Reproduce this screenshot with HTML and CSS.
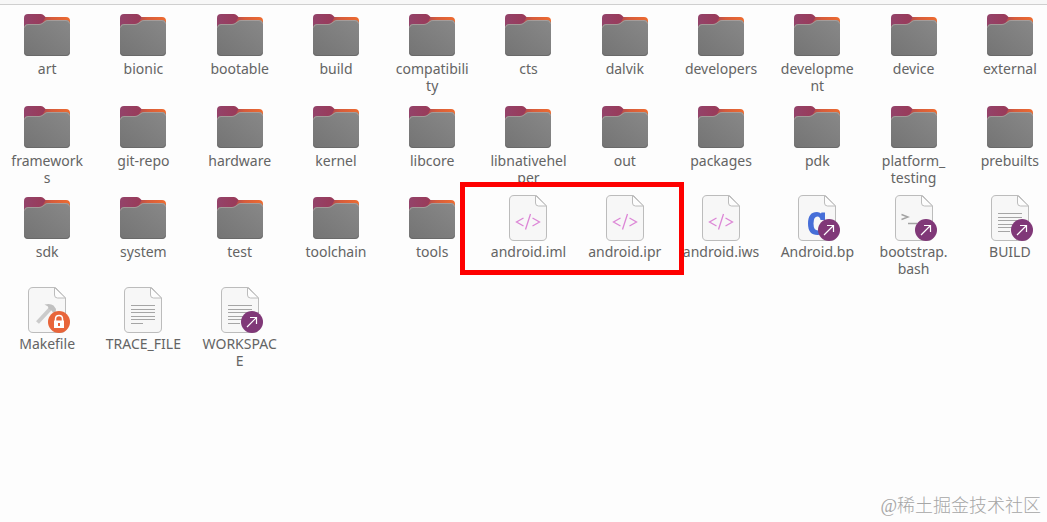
FILE: index.html
```html
<!DOCTYPE html>
<html lang="en">
<head>
<meta charset="utf-8">
<title>Files</title>
<link rel="stylesheet" href="styles.css">
</head>
<body>
<svg class="defs" width="0" height="0" aria-hidden="true">
  <defs>
    <linearGradient id="back" x1="0" x2="1" y1="0" y2="0">
      <stop offset="0" stop-color="#8a3d62"/><stop offset=".4" stop-color="#b04a50"/><stop offset=".6" stop-color="#d65c3c"/><stop offset="1" stop-color="#ee6c30"/>
    </linearGradient>
    <linearGradient id="tab" x1="0" x2="1" y1="0" y2="0">
      <stop offset="0" stop-color="#93436a"/><stop offset="1" stop-color="#9a3a58"/>
    </linearGradient>
    <linearGradient id="front" x1="0" x2="1" y1="1" y2="0">
      <stop offset="0" stop-color="#747474"/><stop offset="1" stop-color="#888"/>
    </linearGradient>
    <symbol id="folder" viewBox="0 0 48 48">
      <path fill="url(#back)" d="M1 8q0-3 4-3h38q4 0 4 4v9H1z"/>
      <path fill="url(#tab)" d="M1 6q0-4 4-4h13q2 0 3 1.500l1.500 1.500-3 6q-1 2-4 2H5q-3 0-4 3z"/>
      <path fill="url(#front)" d="M1 16q0-4 4-4h11q2 0 4-1.500l2-1.500q1-1 3-1h18q4 0 4 4v28q0 4-4 4H5q-4 0-4-4z"/>
      <path fill="none" stroke="#b3a6a4" stroke-width=".7" d="M1.500 15.500q.5-3 3.500-3h11q2 0 4-1.500l2-1.500q1-1 3-1h18q3 0 3.500 3"/>
      <path fill="none" stroke="#666" stroke-width=".8" d="M1.500 40.500q0 3 3.500 3h38q3.500 0 3.500-3"/>
    </symbol>
    <symbol id="page" viewBox="0 0 48 48">
      <path fill="#f7f7f7" stroke="#bcbcbc" d="M10 .5h22.500l10 10.500v30q0 4.500-4.500 4.500H10q-4.500 0-4.500-4.500V5q0-4.500 4.500-4.500z"/>
      <path fill="#fdfdfd" stroke="#bcbcbc" d="M31.500.5v7.500q0 3 3 3h8z"/>
    </symbol>
    <symbol id="code" viewBox="0 0 48 48">
      <use href="#page"/>
      <path fill="none" stroke="#dc86d6" stroke-width="1.300" d="M19.500 23l-7 4 7 4M28.500 23l7 4-7 4M26.500 19l-5 15.500"/>
    </symbol>
    <symbol id="text" viewBox="0 0 48 48">
      <use href="#page"/>
      <path fill="none" stroke="#a5a5a5" d="M12 18.500h24M12 22.500h24M12 25.500h24M12 29.500h24M12 32.500h24M12 36.500h12"/>
    </symbol>
    <symbol id="csource" viewBox="0 0 48 48">
      <use href="#page"/>
      <path fill="#466ed8" d="M32 17.500V25h-4.500q-.5-3.500-3-3.500-4 0-4 7t4.500 7q3 0 5-2l2 3.500q-3 3-7.500 3Q15 40 15 28.500 15 17 24 17q2.500 0 4 1.500l.5-1z"/>
    </symbol>
    <symbol id="shell" viewBox="0 0 48 48">
      <use href="#page"/>
      <path fill="none" stroke="#a3a3a3" stroke-width="1.400" d="M11.500 19.500l6.500 2.500-6.500 2.500M18 28.500h9"/>
    </symbol>
    <symbol id="make" viewBox="0 0 48 48">
      <use href="#page"/>
      <path fill="none" stroke="#cbcbcb" stroke-width="4" d="M14.500 35.500l13-14"/>
      <path fill="#c0c0c0" d="M21.500 17.500q6-1.500 9 1l2.500 3.500-.5 4-2.500-.500-1.500-2-3-2-.5-2z"/>
    </symbol>
    <symbol id="link" viewBox="0 0 48 48">
      <circle cx="36" cy="35" r="11" fill="#803878"/>
      <path fill="none" stroke="#fff" stroke-width="1.200" d="M31 40l9.500-9.500M34 30.500h6.500V37"/>
    </symbol>
    <symbol id="lock" viewBox="0 0 48 48">
      <circle cx="36" cy="35" r="11" fill="#e8653a"/>
      <path fill="none" stroke="#fff" stroke-width="1.500" d="M32.500 34v-2q0-3.500 3.500-3.500t3.500 3.500v2"/>
      <path fill="#fff" fill-rule="evenodd" d="M31 33.500h10V41H31zM35 36v3h2v-3z"/>
    </symbol>
  </defs>
</svg>

<header class="toolbar-edge"></header>
<main>
  <ul class="files">
    <li class="file"><svg class="icon"><use href="#folder"/></svg><span>art</span></li>
    <li class="file"><svg class="icon"><use href="#folder"/></svg><span>bionic</span></li>
    <li class="file"><svg class="icon"><use href="#folder"/></svg><span>bootable</span></li>
    <li class="file"><svg class="icon"><use href="#folder"/></svg><span>build</span></li>
    <li class="file"><svg class="icon"><use href="#folder"/></svg><span>compatibili<br>ty</span></li>
    <li class="file"><svg class="icon"><use href="#folder"/></svg><span>cts</span></li>
    <li class="file"><svg class="icon"><use href="#folder"/></svg><span>dalvik</span></li>
    <li class="file"><svg class="icon"><use href="#folder"/></svg><span>developers</span></li>
    <li class="file"><svg class="icon"><use href="#folder"/></svg><span>developme<br>nt</span></li>
    <li class="file"><svg class="icon"><use href="#folder"/></svg><span>device</span></li>
    <li class="file"><svg class="icon"><use href="#folder"/></svg><span>external</span></li>

    <li class="file"><svg class="icon"><use href="#folder"/></svg><span>framework<br>s</span></li>
    <li class="file"><svg class="icon"><use href="#folder"/></svg><span>git-repo</span></li>
    <li class="file"><svg class="icon"><use href="#folder"/></svg><span>hardware</span></li>
    <li class="file"><svg class="icon"><use href="#folder"/></svg><span>kernel</span></li>
    <li class="file"><svg class="icon"><use href="#folder"/></svg><span>libcore</span></li>
    <li class="file"><svg class="icon"><use href="#folder"/></svg><span>libnativehel<br>per</span></li>
    <li class="file"><svg class="icon"><use href="#folder"/></svg><span>out</span></li>
    <li class="file"><svg class="icon"><use href="#folder"/></svg><span>packages</span></li>
    <li class="file"><svg class="icon"><use href="#folder"/></svg><span>pdk</span></li>
    <li class="file"><svg class="icon"><use href="#folder"/></svg><span>platform_<br>testing</span></li>
    <li class="file"><svg class="icon"><use href="#folder"/></svg><span>prebuilts</span></li>

    <li class="file"><svg class="icon"><use href="#folder"/></svg><span>sdk</span></li>
    <li class="file"><svg class="icon"><use href="#folder"/></svg><span>system</span></li>
    <li class="file"><svg class="icon"><use href="#folder"/></svg><span>test</span></li>
    <li class="file"><svg class="icon"><use href="#folder"/></svg><span>toolchain</span></li>
    <li class="file"><svg class="icon"><use href="#folder"/></svg><span>tools</span></li>
    <li class="file"><svg class="icon"><use href="#code"/></svg><span>android.iml</span></li>
    <li class="file"><svg class="icon"><use href="#code"/></svg><span>android.ipr</span></li>
    <li class="file"><svg class="icon"><use href="#code"/></svg><span>android.iws</span></li>
    <li class="file"><svg class="icon"><use href="#csource"/><use href="#link"/></svg><span>Android.bp</span></li>
    <li class="file"><svg class="icon"><use href="#shell"/><use href="#link"/></svg><span>bootstrap.<br>bash</span></li>
    <li class="file"><svg class="icon"><use href="#text"/><use href="#link"/></svg><span>BUILD</span></li>

    <li class="file"><svg class="icon"><use href="#make"/><use href="#lock"/></svg><span>Makefile</span></li>
    <li class="file"><svg class="icon"><use href="#text"/></svg><span>TRACE_FILE</span></li>
    <li class="file"><svg class="icon"><use href="#text"/><use href="#link"/></svg><span>WORKSPAC<br>E</span></li>
    <li class="highlight" aria-hidden="true"></li>
  </ul>
</main>
<footer class="watermark" lang="zh-CN">@稀土掘金技术社区</footer>
</body>
</html>
```
FILE: styles.css
```css
* {
  box-sizing: border-box;
}

body {
  display: flex;
  flex-direction: column;
  min-height: 100vh;
  margin: 0;
  overflow-x: hidden;
  background: #fdfdfd;
  color: #646464;
  font: 14px/17px "Noto Sans", "Open Sans", sans-serif;
}

.defs {
  position: absolute;
}

.toolbar-edge {
  height: 5px;
  background: #f7f7f7;
  border-bottom: 1px solid #cfcfcf;
}

main {
  flex: 1;
}

/* The last column runs slightly past the right edge of the window. */
.files {
  position: relative;
  display: grid;
  grid-template-columns: repeat(11, minmax(0, 1fr));
  grid-template-rows: 92px 91px 92px;
  margin: 7px -11px 0 -1px;
  padding: 0;
  list-style: none;
}

.file {
  display: flex;
  flex-direction: column;
  align-items: center;
  text-align: center;
  white-space: nowrap;
}

.icon {
  flex: none;
  width: 48px;
  height: 48px;
}

.highlight {
  position: absolute;
  grid-column: 6 / 8;
  grid-row: 3 / 4;
  inset: -13px -11px 12px -20px;
  border: 5px solid #fe0000;
}

.watermark {
  padding: 0 6px 6px;
  color: #a6a6a6;
  font: 300 18px/20px "Liberation Serif", "Noto Sans CJK SC", serif;
  text-align: right;
}
```
